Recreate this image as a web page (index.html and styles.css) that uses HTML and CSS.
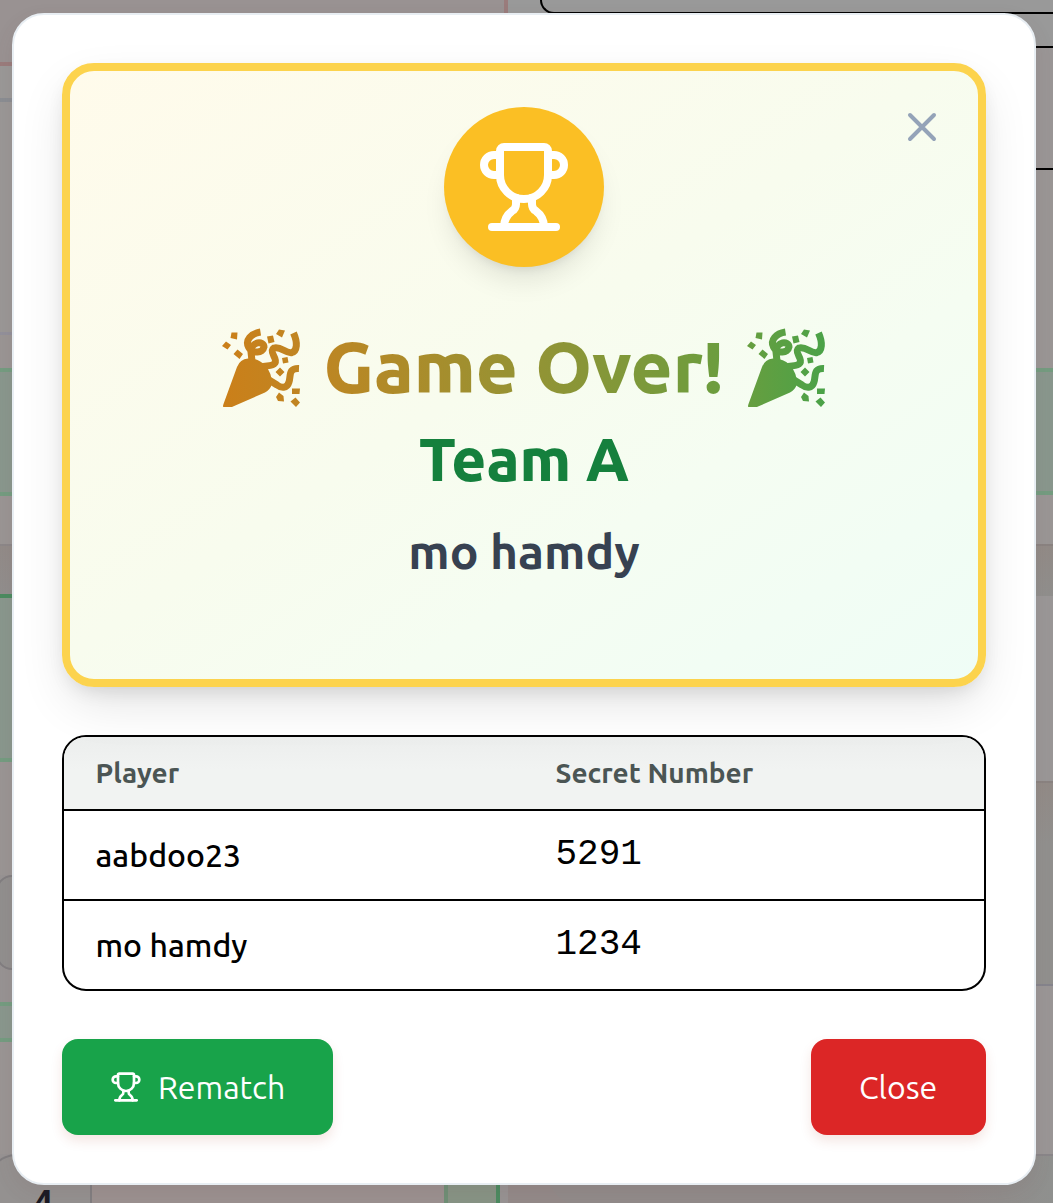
FILE: index.html
```html
<!DOCTYPE html>
<html lang="en">
<head>
<meta charset="utf-8">
<title>Game Over</title>
<link rel="stylesheet" href="styles.css">
</head>
<body>
<svg class="defs" aria-hidden="true">
  <linearGradient id="amber" gradientUnits="userSpaceOnUse" x1="0" y1="0" x2="80" y2="0"><stop stop-color="#cb7f19"/><stop offset="1" stop-color="#c08522"/></linearGradient>
  <linearGradient id="green" gradientUnits="userSpaceOnUse" x1="0" y1="0" x2="80" y2="0"><stop stop-color="#679e3f"/><stop offset="1" stop-color="#4aa248"/></linearGradient>
  <symbol id="trophy" viewBox="0 0 24 24" fill="none" stroke="currentColor" stroke-width="2" stroke-linecap="round" stroke-linejoin="round">
    <path d="M10 14.66v1.626a2 2 0 0 1-.976 1.696A5 5 0 0 0 7 21.978"/>
    <path d="M14 14.66v1.626a2 2 0 0 0 .976 1.696A5 5 0 0 1 17 21.978"/>
    <path d="M18 9h1.5a1 1 0 0 0 0-5H18"/>
    <path d="M4 22h16"/>
    <path d="M6 9a6 6 0 0 0 12 0V3a1 1 0 0 0-1-1H7a1 1 0 0 0-1 1z"/>
    <path d="M6 9H4.5a1 1 0 0 1 0-5H6"/>
  </symbol>
  <symbol id="popper" viewBox="0 0 80 80">
    <path class="solid" d="M2.500 79Q1.500 79 2.500 76L16 39Q19 31 27 30.500Q37 30 44 37Q51 45 51 56Q49 62 44 64.500L12 78.500Q11 79 10 79Z"/>
    <g class="ribbon">
      <path d="M39.500 4C30 5.500 24 12 27.500 19C31.500 26.500 42 25 43 19C43 12.500 30 13 30 24L31 33"/>
      <path d="M72.500 5C77 15 76 23 71 24.500C65 26 60 18 53 20C47 24 57 30 54 35C51 39 45 37 40 39"/>
      <path d="M78 40.500C67 40 70 48 68 54C66 61 60 60 56 57L48 52"/>
    </g>
    <path class="solid" d="M5 13.500l5 3.500-3.500 4.500-5.500-3.500zM10.500 4.500h6l-.5 7-6.500-1.500zM16.500 21.500l5.500 4.500-3.500 5-6-5zM46 8.500l6-1 1.500 6.500-6 1.500zM58 1.500l6 1-3 7-6-3.500zM61 30l5.500-1 1 5.500-5.500 1zM59 39.500l4.500 4.500-4.500 4.500-4.500-4.500zM71 60.500h8l-.5 5.500h-7.500zM58 64.500l4.500 3.500 .5 5.500-6-.5-2-4zM74.500 69.500l4.500 5-4 4.500-5.500-5.500z"/>
  </symbol>
</svg>

<div class="page">
  <div class="board">
    <div class="strip rose"></div>
    <div class="strip slate"></div>
    <div class="strip entry"></div>
    <div class="strip gap"></div>
    <div class="strip mint"></div>
    <div class="strip foot"></div>
    <div class="strip space"></div>
    <div class="strip mint tall"></div>
    <div class="strip rest"></div>
    <div class="slot"></div>
    <div class="strip thin"></div>
    <div class="strip mint low"></div>
    <div class="strip under"></div>
    <div class="keys"><div class="key">4</div><div class="key-gap"></div><div class="key-mint"></div></div>
  </div>
  <div class="side">
    <div class="top"><div class="field"></div></div>
    <div class="line-a"></div>
    <div class="line-b"></div>
    <div class="blank"></div>
    <div class="mint side-mint"></div>
    <div class="s1"></div>
    <div class="s2"></div>
    <div class="s3"></div>
    <div class="s4"></div>
    <div class="s5"></div>
    <div class="s6"><div class="s6-card"></div></div>
  </div>
</div>

<main class="modal">
  <section class="winner">
    <svg class="dismiss" viewBox="0 0 24 24" fill="none" stroke="currentColor" stroke-width="2" stroke-linecap="round"><path d="M18 6 6 18M6 6l12 12"/></svg>
    <div class="medal"><svg class="cup"><use href="#trophy"/></svg></div>
    <h1 class="title">
      <svg class="popper first"><use href="#popper"/></svg>
      <span class="headline">Game Over!</span>
      <svg class="popper last"><use href="#popper"/></svg>
    </h1>
    <p class="team">Team A</p>
    <p class="name">mo hamdy</p>
  </section>

  <section class="table">
    <div class="row head"><span>Player</span><span>Secret Number</span></div>
    <div class="row"><span>aabdoo23</span><span class="num">5291</span></div>
    <div class="row"><span>mo hamdy</span><span class="num">1234</span></div>
  </section>

  <footer class="actions">
    <button class="btn rematch"><svg class="btn-cup"><use href="#trophy"/></svg><span>Rematch</span></button>
    <button class="btn close"><span>Close</span></button>
  </footer>
</main>
</body>
</html>
```
FILE: styles.css
```css
* { box-sizing: border-box; }
body {
  margin: 0;
  height: 1203px;
  overflow: hidden;
  background: #979393;
  font-family: Ubuntu, "Open Sans", "Noto Sans", sans-serif;
}
.defs { position: absolute; width: 0; height: 0; }

/* dimmed game board behind the dialog */
.page { display: flex; height: 1203px; overflow: hidden; }
.board { width: 508px; }
.side { flex: 1; background: #979393; }
.rose { height: 66px; background: #999292; border-right: 4px solid #9a7c7c; border-bottom: 4px solid #9a7c7c; }
.slate { height: 36px; background: #9a9897; border-bottom: 4px solid #8a8d92; }
.entry { height: 233px; background: #9a9796; border-bottom: 3px solid #92909a; }
.gap { height: 33px; background: #9a9594; }
.mint { height: 128px; background: #89978d; border-top: 4px solid #749c80; border-bottom: 4px solid #749c80; }
.foot { height: 50px; background: #9a9594; border-bottom: 2px solid #8c8788; }
.space { height: 48px; background: linear-gradient(#928b88, #918e8d); }
.mint.tall { height: 168px; border-top-color: #4b8b60; }
.rest { height: 113px; background: #9a9594; }
.slot { width: 90px; height: 95px; margin-left: -4px; border: 2px solid #817e80; border-radius: 16px; background: #918f8e; }
.thin { height: 32px; }
.mint.low { height: 40px; }
.under { height: 112px; background: #9a9594; }
.keys { display: flex; height: 49px; margin-left: -12px; }
.key { width: 104px; padding: 28px 0 0 43px; background: #949190; border: 2px solid #817e80; border-bottom: 0; border-radius: 28px 0 0; font: 700 36px/40px "Liberation Sans", sans-serif; color: #191923; }
.key-gap { width: 352px; background: #9b9190; }
.key-mint { width: 56px; background: #879485; border-left: 4px solid #6f8f76; border-right: 4px solid #4b8b60; }

.top { height: 14px; padding-left: 32px; background: #999; }
.field { height: 14px; border: 2px solid #000; border-width: 0 0 2px 2px; border-radius: 0 0 0 16px; }
.line-a { height: 34px; background: #999; border-bottom: 2px solid #000; }
.line-b { height: 122px; background: #9a9696; border-bottom: 2px solid #000; }
.blank { height: 198px; background: #9a9695; }
.side-mint { height: 127px; }
.s1 { height: 51px; background: #9a9695; border-bottom: 2px solid #8a8381; }
.s2 { height: 50px; background: linear-gradient(#928b87, #908f8d); }
.s3 { height: 187px; background: #9a9797; border-bottom: 2px solid #8a8381; }
.s4 { height: 203px; background: linear-gradient(#928b87, #91908e 30%); border-bottom: 2px solid #85848c; }
.s5 { height: 170px; background: #9a9696; border-bottom: 2px solid #898689; }
.s6 { height: 49px; padding-left: 40px; background: #938a89; }
.s6-card { height: 49px; border-radius: 0 0 0 32px; background: linear-gradient(90deg, #918b8a 80%, #8f908e); }

/* dialog laid over the board */
.modal {
  position: absolute;
  left: 12px;
  top: 13px;
  width: 1024px;
  height: 1172px;
  padding: 48px;
  display: flex;
  flex-direction: column;
  gap: 48px;
  background: #fff;
  border: 2px solid #e8eef3;
  border-radius: 32px;
  box-shadow: 0 8px 20px rgba(110, 70, 65, .1);
}
.winner {
  position: relative;
  height: 624px;
  padding-top: 36px;
  display: flex;
  flex-direction: column;
  align-items: center;
  border: 8px solid #fcd34d;
  border-radius: 32px;
  background: linear-gradient(to bottom right, #fffbeb, #f8fcee 48%, #f5fdf2 68%, #effdf6);
  box-shadow: 0 20px 50px -6px rgba(0, 0, 0, .12), 0 8px 20px -6px rgba(0, 0, 0, .12);
}
.dismiss { position: absolute; top: 32px; right: 32px; width: 48px; height: 48px; color: #94a3b8; }
.medal {
  width: 160px;
  height: 160px;
  display: grid;
  place-items: center;
  border-radius: 50%;
  background: #fbbf24;
  color: #fff;
  box-shadow: 0 18px 28px -6px rgba(0, 0, 0, .1), 0 8px 12px -8px rgba(0, 0, 0, .12);
}
.cup { width: 96px; height: 96px; }
.title {
  width: 606px;
  height: 80px;
  margin: 60px 0 16px;
  display: flex;
  justify-content: space-between;
  font-size: 72px;
  line-height: 80px;
  font-weight: 800;
  white-space: nowrap;
}
.popper { width: 80px; height: 80px; margin-top: 1px; }
.first { --paint: url(#amber); }
.last { --paint: url(#green); margin-right: 1px; }
.solid { fill: var(--paint); }
.ribbon { fill: none; stroke: var(--paint); stroke-width: 7; }
.headline {
  color: transparent;
  background: linear-gradient(90deg, #bd8623, #959334 50%, #6b9d3e);
  -webkit-background-clip: text;
  background-clip: text;
}
.team, .name { margin: 0; white-space: nowrap; }
.team { font-size: 60px; line-height: 72px; font-weight: 800; color: #15803d; }
.name { margin-top: 28px; font-size: 48px; line-height: 56px; font-weight: 600; color: #374151; }

.table { height: 256px; border: 2px solid #000; border-radius: 24px; overflow: hidden; }
.row { height: 90px; padding-left: 31.5px; display: grid; grid-template-columns: 460px 1fr; font-size: 32px; font-weight: 500; line-height: 89px; color: #000; border-bottom: 2px solid #000; }
.row:last-child { border-bottom: 0; }
.head { height: 74px; line-height: 72px; font-size: 28px; font-weight: 600; color: #4b5554; background: linear-gradient(#eceeed, #f1f3f2 45%); }
.num { font-family: "Liberation Mono", monospace; font-size: 36px; font-weight: 400; line-height: 88px; }

.actions { display: flex; justify-content: space-between; }
.btn { height: 96px; padding: 0 48px; display: flex; align-items: center; gap: 16px; border: 0; border-radius: 16px; color: #fff; font: 400 32px/97px Ubuntu, "Open Sans", sans-serif; white-space: nowrap; box-shadow: 0 6px 12px rgba(170, 60, 40, .13); }
.rematch { width: 271px; background: #18a34a; }
.close { width: 175px; background: #dc2626; }
.btn-cup { width: 32px; height: 32px; flex: none; }
```
